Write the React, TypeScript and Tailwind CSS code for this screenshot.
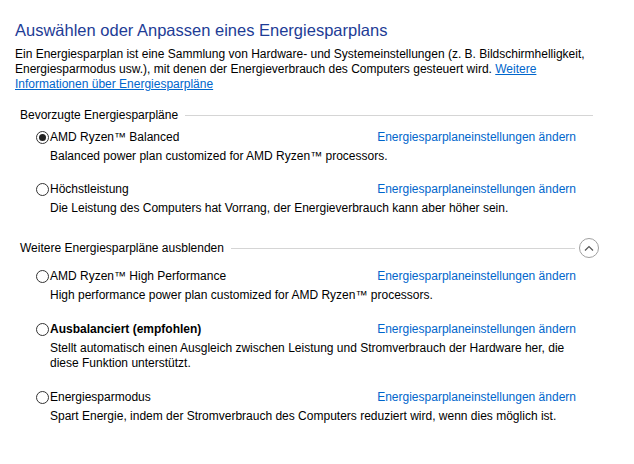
import React from "react";

interface Plan {
  id: number;
  name: string;
  desc: string[];
  bold?: boolean;
  selected?: boolean;
}

const preferred: Plan[] = [
  {
    id: 1,
    name: "AMD Ryzen™ Balanced",
    desc: ["Balanced power plan customized for AMD Ryzen™ processors."],
    selected: true,
  },
  {
    id: 2,
    name: "Höchstleistung",
    desc: [
      "Die Leistung des Computers hat Vorrang, der Energieverbrauch kann aber höher sein.",
    ],
  },
];

const more: Plan[] = [
  {
    id: 3,
    name: "AMD Ryzen™ High Performance",
    desc: ["High performance power plan customized for AMD Ryzen™ processors."],
  },
  {
    id: 4,
    name: "Ausbalanciert (empfohlen)",
    desc: [
      "Stellt automatisch einen Ausgleich zwischen Leistung und Stromverbrauch der Hardware her, die",
      "diese Funktion unterstützt.",
    ],
    bold: true,
  },
  {
    id: 5,
    name: "Energiesparmodus",
    desc: [
      "Spart Energie, indem der Stromverbrauch des Computers reduziert wird, wenn dies möglich ist.",
    ],
  },
];

function Radio({ checked }: { checked?: boolean }) {
  return (
    <span className="w-[13px] h-[13px] rounded-full border border-[#333] bg-white flex items-center justify-center shrink-0">
      {checked && <span className="w-[7px] h-[7px] rounded-full bg-[#222]" />}
    </span>
  );
}

function PlanRow({ plan }: { plan: Plan }) {
  return (
    <div className="pl-[21px]">
      <div className="flex items-center h-[16px]">
        <Radio checked={plan.selected} />
        <span className={`ml-[1px] ${plan.bold ? "font-bold" : ""}`}>
          {plan.name}
        </span>
        <a className="ml-auto mr-[58px] text-[#0066cc] cursor-pointer">
          Energiesparplaneinstellungen ändern
        </a>
      </div>
      <div className="mt-[4px] pl-[14px] leading-[15px]">
        {plan.desc.map((line) => (
          <div key={line}>{line}</div>
        ))}
      </div>
    </div>
  );
}

function SectionHeader({
  title,
  toggle,
}: {
  title: string;
  toggle?: boolean;
}) {
  return (
    <div
      className={`flex items-center h-[20px] pl-[5px] ${
        toggle ? "pr-[35px]" : "pr-[41px]"
      }`}
    >
      <span>{title}</span>
      <div className="flex-1 h-px bg-[#d5d5d5] ml-[7px]" />
      {toggle && (
        <button className="ml-[4px] w-[20px] h-[20px] rounded-full border border-[#a0a0a0] bg-white flex items-center justify-center">
          <svg width="10" height="6" viewBox="0 0 10 6" fill="none">
            <path d="M1 5.5 L5 1.5 L9 5.5" stroke="#555" strokeWidth="1.2" />
          </svg>
        </button>
      )}
    </div>
  );
}

export default function App() {
  return (
    <div className="w-[634px] h-[464px] bg-white text-black text-[12px] font-['Segoe_UI','Liberation_Sans',Arial,sans-serif] pl-[15px] pt-[19px] overflow-hidden">
      <h1 className="text-[16.5px] leading-[22px] text-[#1e3c96]">
        Auswählen oder Anpassen eines Energiesparplans
      </h1>
      <p className="mt-[6px] leading-[15px]">
        Ein Energiesparplan ist eine Sammlung von Hardware- und Systemeinstellungen (z. B. Bildschirmhelligkeit,
        <br />
        Energiesparmodus usw.), mit denen der Energieverbrauch des Computers gesteuert wird.{" "}
        <a className="text-[#0066cc] underline cursor-pointer">
          Weitere
          <br />
          Informationen über Energiesparpläne
        </a>
      </p>

      <div className="mt-[13px]">
        <SectionHeader title="Bevorzugte Energiesparpläne" />
      </div>
      <div className="mt-[4px] flex flex-col gap-[17px]">
        {preferred.map((p) => (
          <PlanRow key={p.id} plan={p} />
        ))}
      </div>

      <div className="mt-[22px]">
        <SectionHeader title="Weitere Energiesparpläne ausblenden" toggle />
      </div>
      <div className="mt-[10px] flex flex-col gap-[18px]">
        {more.map((p) => (
          <PlanRow key={p.id} plan={p} />
        ))}
      </div>
    </div>
  );
}
